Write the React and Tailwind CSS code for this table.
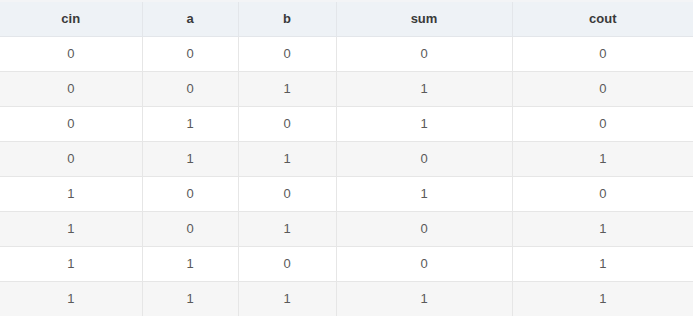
import React from 'react';

const columns = [
    { key: 'cin', width: 'w-[142px]' },
    { key: 'a', width: 'w-[96px]' },
    { key: 'b', width: 'w-[98px]' },
    { key: 'sum', width: 'w-[176px]' },
    { key: 'cout', width: 'w-[181px]' },
];

const rows = [
    [0, 0, 0, 0, 0],
    [0, 0, 1, 1, 0],
    [0, 1, 0, 1, 0],
    [0, 1, 1, 0, 1],
    [1, 0, 0, 1, 0],
    [1, 0, 1, 0, 1],
    [1, 1, 0, 0, 1],
    [1, 1, 1, 1, 1],
];

const App = () => {
    return (
        <div className="w-[693px] h-[316px] bg-white font-['Liberation_Sans',Arial,sans-serif] overflow-hidden">
            <table className="w-[693px] table-fixed border-collapse text-[13px]">
                <colgroup>
                    {columns.map((c) => (
                        <col key={c.key} className={c.width} />
                    ))}
                </colgroup>
                <thead>
                    <tr className="bg-[#eef2f6]">
                        {columns.map((c, i) => (
                            <th
                                key={c.key}
                                className={`h-[35px] p-0 text-center font-bold text-[#3a3a3a] border-t-2 border-t-[#f3f4f6] border-b border-b-[#e3e6ea] ${i < columns.length - 1 ? 'border-r border-r-[#e3e6ea]' : ''}`}
                            >
                                {c.key}
                            </th>
                        ))}
                    </tr>
                </thead>
                <tbody>
                    {rows.map((row, r) => (
                        <tr key={r} className={r % 2 === 1 ? 'bg-[#f6f6f6]' : 'bg-white'}>
                            {row.map((v, i) => (
                                <td
                                    key={i}
                                    className={`h-[35px] p-0 text-center text-[#5a5a5a] border-b border-b-[#e6e6e6] ${i < row.length - 1 ? 'border-r border-r-[#e6e6e6]' : ''}`}
                                >
                                    {v}
                                </td>
                            ))}
                        </tr>
                    ))}
                </tbody>
            </table>
        </div>
    );
};

export default App;
